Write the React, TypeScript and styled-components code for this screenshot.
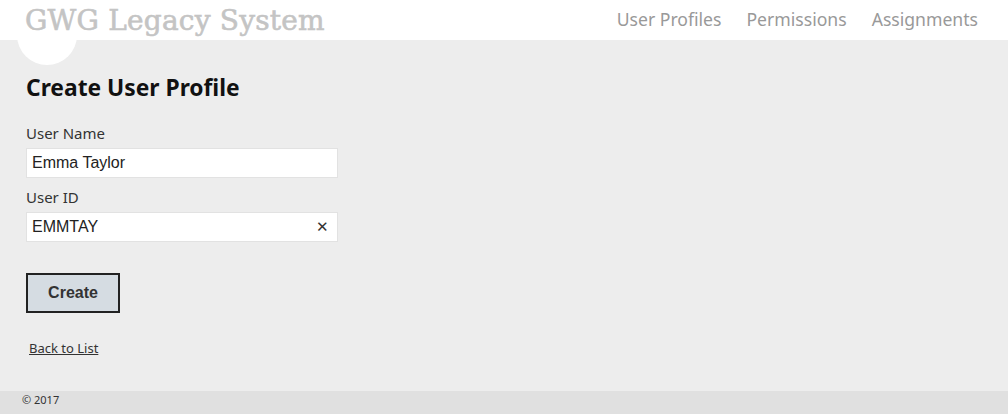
import React, { useState } from 'react';
import styled, { createGlobalStyle } from 'styled-components';

const GlobalStyle = createGlobalStyle`
  html, body {
    margin: 0;
    padding: 0;
    background: #ededed;
    font-family: "Noto Sans", "Open Sans", sans-serif;
  }
`;

const Page = styled.div`
  display: flex;
  flex-direction: column;
  min-height: 414px;
  position: relative;
  overflow: hidden;
`;

const Header = styled.header`
  height: 40px;
  background: #fff;
  display: flex;
  align-items: center;
  justify-content: space-between;
  padding: 0 30px 0 25px;
  position: relative;
`;

const LogoCircle = styled.div`
  position: absolute;
  left: 17px;
  top: 5px;
  width: 60px;
  height: 60px;
  border-radius: 50%;
  background: #fff;
`;

const Brand = styled.a`
  position: relative;
  font-family: "DejaVu Serif", "Liberation Serif", serif;
  font-size: 28px;
  color: #c4c4c4;
  letter-spacing: 0.2px;
  -webkit-text-stroke: 0.6px #c4c4c4;
  text-decoration: none;
  margin-top: 1px;
`;

const Nav = styled.nav`
  display: flex;
  gap: 25px;
  margin-top: -3px;
`;

const NavLink = styled.a`
  font-size: 17.6px;
  color: #999;
  text-decoration: none;
`;

const Main = styled.main`
  flex: 1;
  padding: 32px 26px 0;
  position: relative;
`;

const Title = styled.h2`
  margin: 0 0 20px;
  font-size: 22.8px;
  font-weight: 700;
  color: #111;
`;

const Form = styled.form`
  display: flex;
  flex-direction: column;
  width: 312px;
`;

const Label = styled.label`
  font-size: 15px;
  color: #333;
  margin-bottom: 5px;
`;

const Field = styled.div`
  position: relative;
  margin-bottom: 9px;
`;

const Input = styled.input`
  box-sizing: border-box;
  width: 312px;
  height: 30px;
  border: 1px solid #e2e2e2;
  background: #fff;
  padding: 0 5px;
  font-family: "Liberation Sans", Arial, sans-serif;
  font-size: 16px;
  color: #222;
  outline: none;
`;

const Clear = styled.span`
  position: absolute;
  right: 9px;
  top: 6px;
  font-size: 15px;
  color: #333;
  font-family: "Liberation Sans", Arial, sans-serif;
`;

const Button = styled.button`
  margin-top: 22px;
  width: 94px;
  height: 40px;
  background: #d5dce2;
  border: 2px solid #222;
  font-family: "Liberation Sans", Arial, sans-serif;
  font-size: 16px;
  font-weight: 700;
  color: #333;
`;

const BackLink = styled.a`
  display: inline-block;
  margin: 26px 0 0 3px;
  font-size: 13px;
  color: #333;
  text-decoration: underline;
`;

const Footer = styled.footer`
  height: 23px;
  box-sizing: border-box;
  background: #e0e0e0;
  padding: 1px 0 0 22px;
  font-size: 11px;
  color: #333;
`;

const App: React.FC = () => {
  const [name, setName] = useState('Emma Taylor');
  const [userId, setUserId] = useState('EMMTAY');

  return (
    <Page>
      <GlobalStyle />
      <LogoCircle />
      <Header>
        <Brand href="#">GWG Legacy System</Brand>
        <Nav>
          <NavLink href="#">User Profiles</NavLink>
          <NavLink href="#">Permissions</NavLink>
          <NavLink href="#">Assignments</NavLink>
        </Nav>
      </Header>
      <Main>
        <Title>Create User Profile</Title>
        <Form onSubmit={(e) => e.preventDefault()}>
          <Label>User Name</Label>
          <Field>
            <Input value={name} onChange={(e) => setName(e.target.value)} />
          </Field>
          <Label>User ID</Label>
          <Field>
            <Input value={userId} onChange={(e) => setUserId(e.target.value)} />
            <Clear>✕</Clear>
          </Field>
          <Button type="submit">Create</Button>
        </Form>
        <BackLink href="#">Back to List</BackLink>
      </Main>
      <Footer>© 2017</Footer>
    </Page>
  );
};

export default App;
